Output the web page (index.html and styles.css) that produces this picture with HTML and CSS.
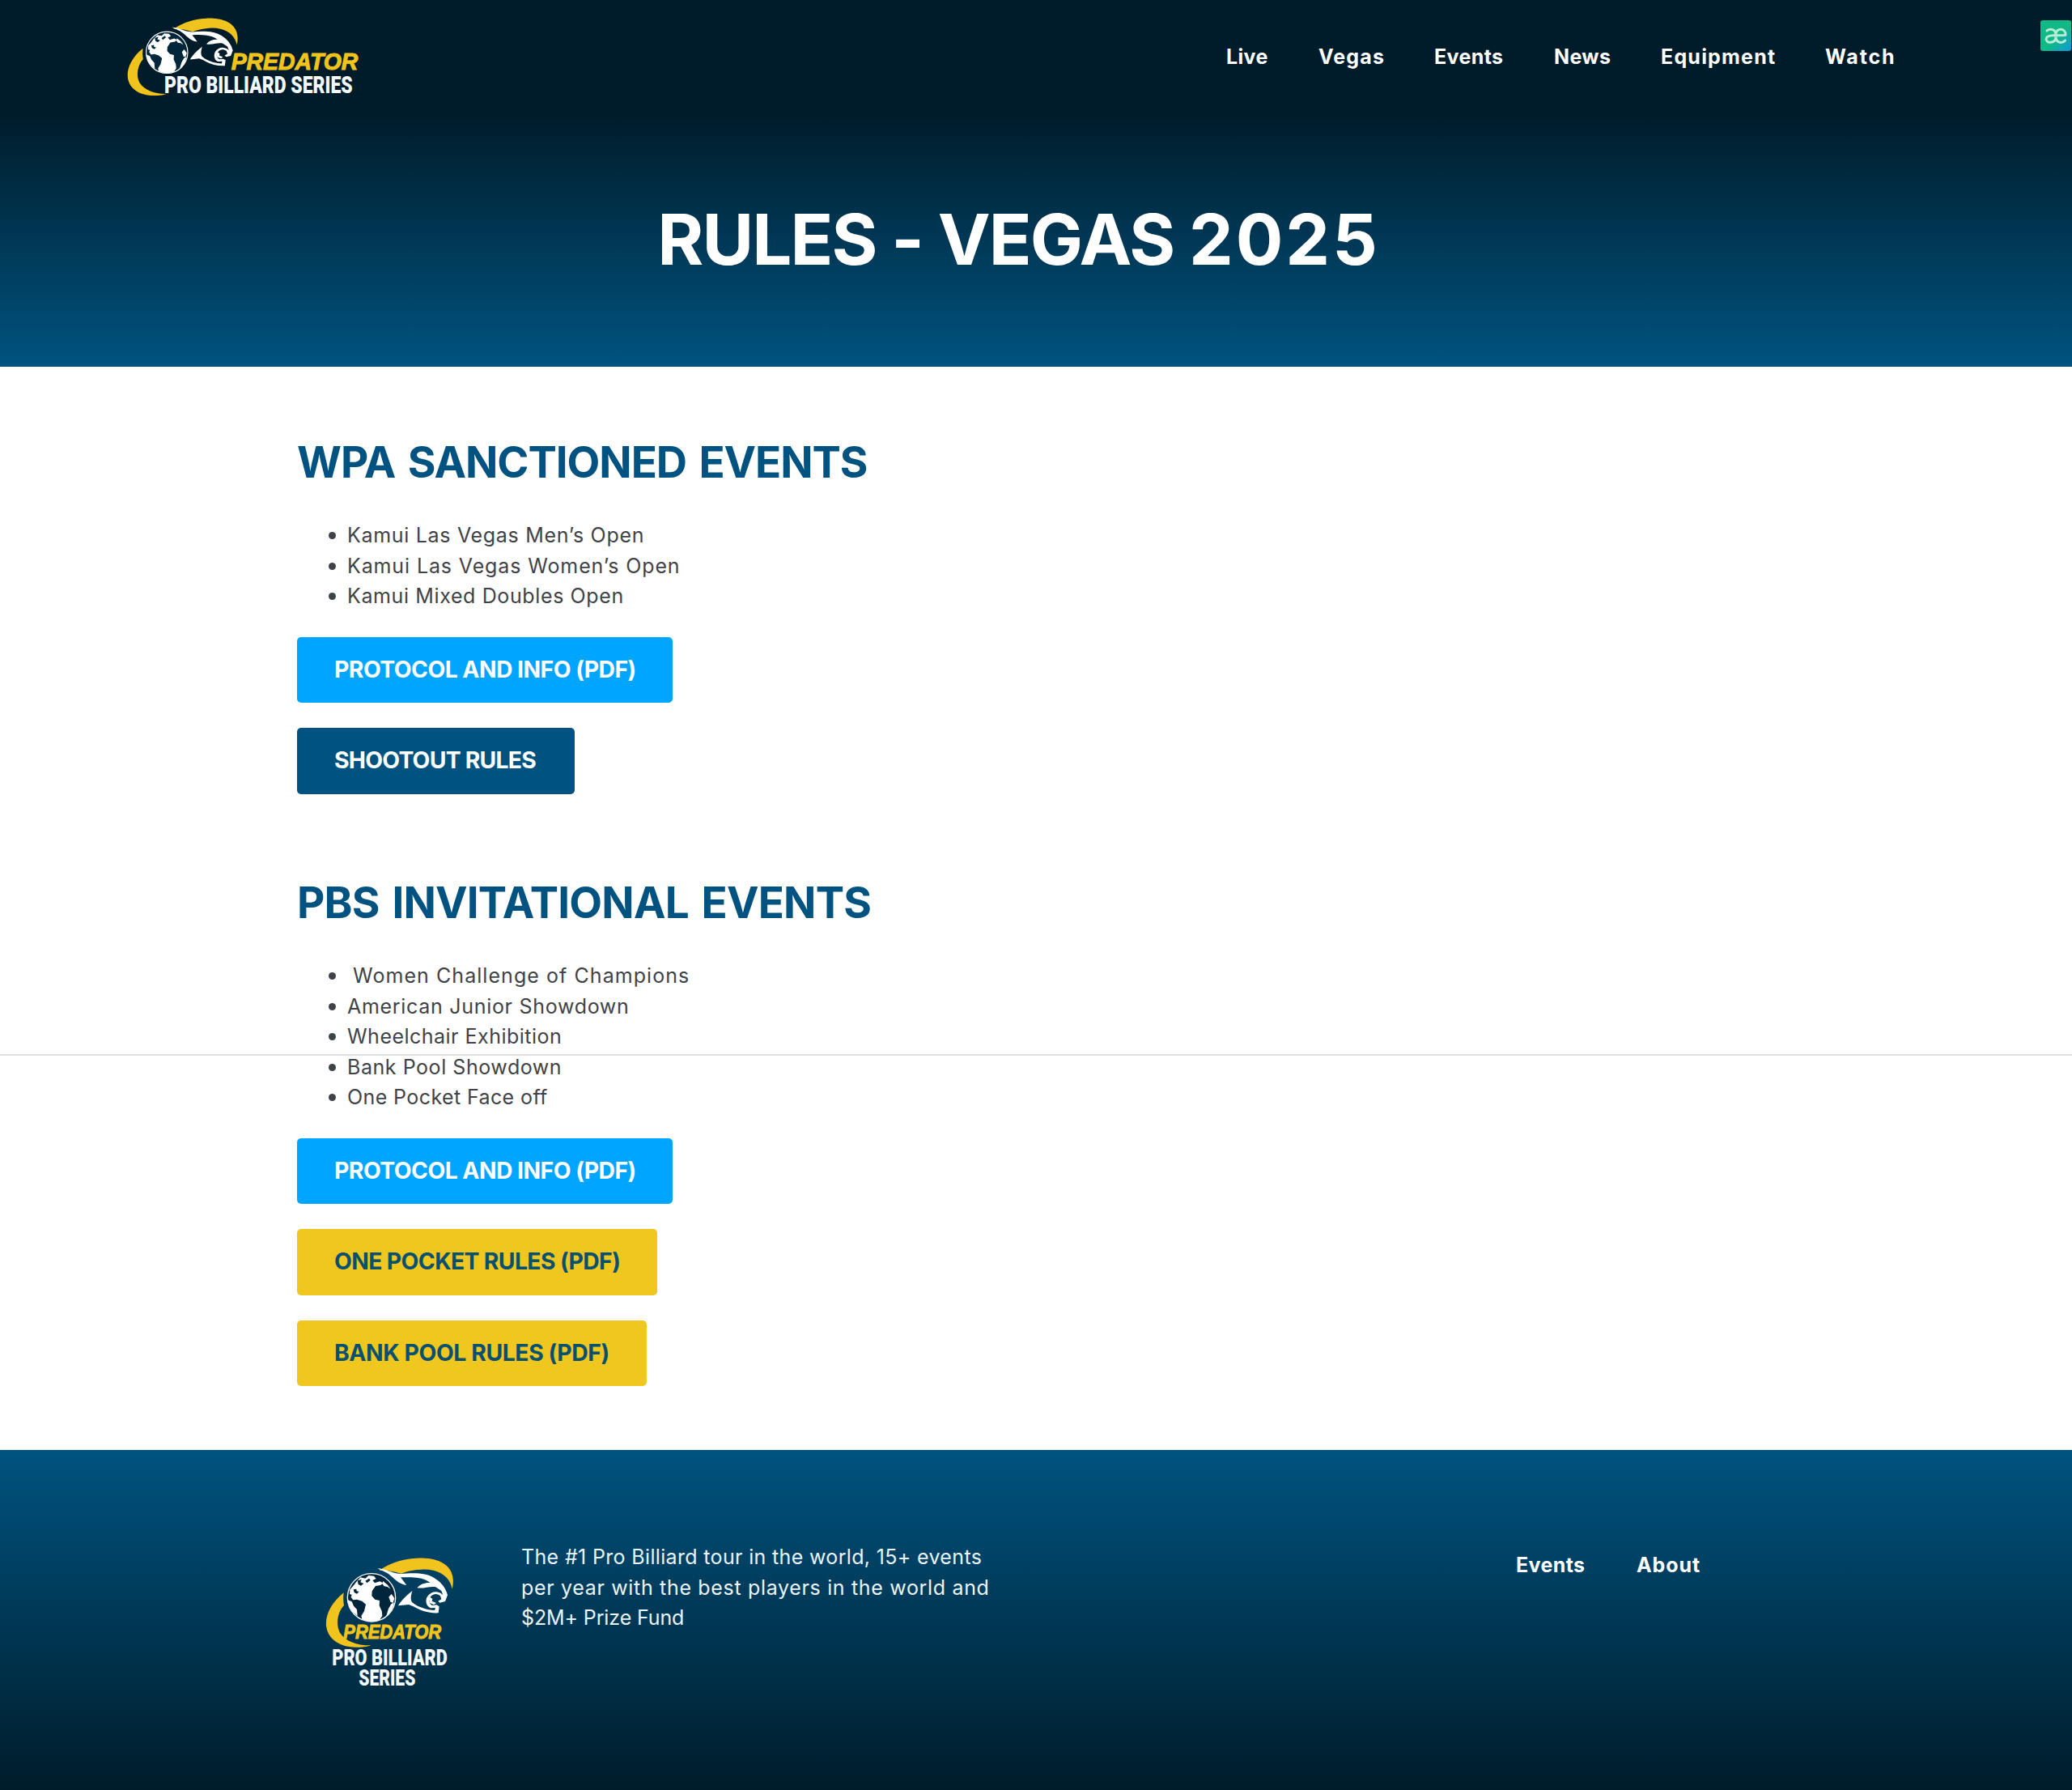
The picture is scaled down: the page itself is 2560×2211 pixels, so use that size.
FILE: index.html
```html
<!DOCTYPE html>
<html lang="en">
<head>
<meta charset="utf-8">
<title>Rules - Vegas 2025</title>
<link rel="stylesheet" href="styles.css">
</head>
<body>
<svg class="defs" aria-hidden="true">
  <defs>
    <symbol id="emblem" viewBox="0 0 570 600" overflow="visible">
      <!-- orbit swooshes -->
      <path fill="#f0c41c" d="M236 119C285 85 345 71 405 74C480 78 523 118 506 188C500 154 478 130 436 119C392 109 345 121 316 131Q282 119 236 119Z"/>
      <path fill="#f0c41c" d="M104 202C62 235 35 282 39 325C45 378 95 408 165 404C185 403 199 400 205 397C155 398 112 383 90 350C72 315 84 270 105 249Q101 226 104 202Z"/>
      <!-- globe -->
      <circle cx="207" cy="220" r="89" fill="#01263c" stroke="#fff" stroke-width="4"/>
      <path fill="#fff" d="M151 161L166 145L184 149L196 138L216 140L224 150L211 156L219 166L238 160L250 166L241 174L222 177L209 196L208 214L220 227L237 231L236 250L245 270L247 287L237 303C217 311 195 309 172 301L169 288L180 270L186 245L172 233L153 227L139 229L131 218L134 209L126 207L127 190L139 177Z"/>
      <path fill="#fff" d="M118 228L134 235L141 251L153 264L155 288C137 276 122 255 118 228ZM250 159L267 173L278 188L266 180L254 178L247 169ZM281 207L292 222L287 239L278 237L271 218ZM291 238C287 262 276 279 261 290L270 261L280 244Z"/>
      <path fill="#01263c" d="M155 157L170 153L166 163L178 168L168 176L158 171ZM184 158L198 149L203 155L190 166ZM140 190L151 188L152 196L161 198L153 206L143 201Z"/>
      <!-- panther -->
      <path fill="#fff" d="M228 112C256 113 283 130 313 132C370 127 411 129 439 147C468 164 483 187 489 211L480 234L460 239L454 233L466 226L462 214C450 204 435 205 425 218C416 230 421 244 431 249L448 247L458 253L455 277C421 279 390 269 361 252L345 246L306 250C315 233 340 209 358 195C353 213 350 227 358 238C381 257 414 266 441 267L444 258L426 259C409 252 405 232 414 216C427 198 446 194 464 204L472 210L466 195L445 181C424 176 403 188 376 184C388 169 409 163 424 165C397 142 353 144 315 145L337 174C306 169 294 151 276 137C260 124 242 119 228 112Z"/>
      <path fill="#fff" d="M418 214L433 225L431 233L447 240L438 246L422 240Z"/>
    </symbol>
    <linearGradient id="badge-fill" x1="0" y1="0" x2="1" y2="1">
      <stop offset=".55" stop-color="#12b886"/><stop offset="1" stop-color="#0c9bdc"/>
    </linearGradient>
  </defs>
</svg>

<header class="site-header">
  <a class="header-logo">
    <svg viewBox="0 0 960 360" width="320" height="120" role="img" aria-label="Predator Pro Billiard Series">
      <use href="#emblem" x="0" y="0" width="570" height="600" transform="translate(19.5 -26) scale(.866)"/>
      <text class="logo-predator" x="437" y="227" textLength="470" lengthAdjust="spacingAndGlyphs">PREDATOR</text>
      <rect x="188" y="245" width="24" height="74" fill="#001c2a"/>
      <text class="logo-series" x="189" y="314" textLength="698" lengthAdjust="spacingAndGlyphs">PRO BILLIARD SERIES</text>
    </svg>
  </a>
  <nav class="main-nav">
    <a class="nav-live">Live</a><a class="nav-vegas">Vegas</a><a class="nav-events">Events</a><a class="nav-news">News</a><a class="nav-equipment">Equipment</a><a class="nav-watch">Watch</a>
  </nav>
</header>

<div class="hero"><h1>RULES - VEGAS <span class="year">2025</span></h1></div>

<main>
  <section>
    <h2 class="title-wpa">WPA SANCTIONED EVENTS</h2>
    <ul>
      <li><span class="t-men">Kamui Las Vegas Men’s Open</span></li>
      <li><span class="t-women">Kamui Las Vegas Women’s Open</span></li>
      <li><span class="t-doubles">Kamui Mixed Doubles Open</span></li>
    </ul>
    <div class="buttons">
      <a class="btn btn-sky btn-protocol">PROTOCOL AND INFO (PDF)</a>
      <a class="btn btn-navy btn-shootout">SHOOTOUT RULES</a>
    </div>
  </section>
  <section>
    <h2 class="title-pbs">PBS INVITATIONAL EVENTS</h2>
    <ul>
      <li><span class="t-champions">Women Challenge of Champions</span></li>
      <li><span class="t-junior">American Junior Showdown</span></li>
      <li><span class="t-wheelchair">Wheelchair Exhibition</span></li>
      <li><span class="t-bank">Bank Pool Showdown</span></li>
      <li><span class="t-pocket">One Pocket Face off</span></li>
    </ul>
    <div class="buttons">
      <a class="btn btn-sky btn-protocol">PROTOCOL AND INFO (PDF)</a>
      <a class="btn btn-gold btn-pocket">ONE POCKET RULES (PDF)</a>
      <a class="btn btn-gold btn-bank">BANK POOL RULES (PDF)</a>
    </div>
  </section>
</main>

<footer>
  <svg class="footer-logo" viewBox="0 0 570 600" width="190" height="200" role="img" aria-label="Predator Pro Billiard Series">
    <use href="#emblem" width="570" height="600"/>
    <text class="logo-predator" x="103" y="373" textLength="362" lengthAdjust="spacingAndGlyphs">PREDATOR</text>
    <text class="logo-series" x="61" y="472" textLength="427" lengthAdjust="spacingAndGlyphs">PRO BILLIARD</text>
    <text class="logo-series" x="160" y="546" textLength="210" lengthAdjust="spacingAndGlyphs">SERIES</text>
  </svg>
  <p><span class="f-one">The #1 Pro Billiard tour in the world, 15+ events</span><span class="f-two">per year with the best players in the world and</span><span class="f-three">$2M+ Prize Fund</span></p>
  <nav class="footer-nav"><a class="nav-events">Events</a><a class="nav-about">About</a></nav>
</footer>

<div class="page-rule"></div>
<svg class="badge" viewBox="0 0 38 38" width="38" height="38" aria-hidden="true">
  <rect width="38" height="38" rx="3" fill="url(#badge-fill)"/>
  <path fill="none" stroke="#b9ecd8" stroke-width="3" stroke-linecap="round" stroke-linejoin="round" d="M8 13C11 10.500 17 10.500 18.500 15L19 22C18 28 8 29.500 7 23.500C7 18.500 13 18.500 31 18.500C31.500 9 20 9 19 17V21C20 28.500 27 29 30.500 25"/>
</svg>
</body>
</html>
```
FILE: styles.css
```css
* { box-sizing: border-box; }

body {
  margin: 0;
  position: relative;
  background: #fff;
  font: 400 25px/37.5px Inter, sans-serif;
  color: #3f4347;
}

h1, h2, ul, p { margin: 0; }
.defs { position: absolute; width: 0; height: 0; }

/* Header */
.site-header {
  display: flex;
  justify-content: space-between;
  height: 140px;
  padding: 10px 220px 0 140px;
  background: #001c2a;
}
.header-logo svg { display: block; }
.logo-predator { font: italic 700 87px "Liberation Sans", sans-serif; fill: #f0c41c; stroke: #f0c41c; stroke-width: 3; }
.logo-series { font: 900 90px Roboto, sans-serif; fill: #f2f8fc; }
.footer-logo .logo-predator { font-size: 74px; }
.footer-logo .logo-series { font-size: 83px; }

.main-nav {
  display: grid;
  grid-template-columns: 114px 143px 148px 132px 203px 85px;
  padding-top: 42px;
}
.main-nav, .footer-nav { color: #fff; font-weight: 700; white-space: nowrap; }
.nav-live { letter-spacing: .35px; }
.nav-vegas { letter-spacing: 1.16px; }
.nav-events { letter-spacing: .37px; }
.nav-news { letter-spacing: .38px; }
.nav-equipment { letter-spacing: 1.21px; }
.nav-watch { letter-spacing: 1.84px; }
.nav-about { letter-spacing: .92px; }

/* Title band */
.hero {
  height: 313px;
  padding: 106px 43px 0 0;
  background: linear-gradient(#001c2a, #005380);
  text-align: center;
}
h1 { font: 700 87px/100px Inter, sans-serif; letter-spacing: -1.9px; color: #fff; }
.year { letter-spacing: 3px; }

/* Rules */
main {
  display: flex;
  flex-direction: column;
  gap: 104.5px;
  padding: 88px 367px 79px;
}
h2 { font: 700 53px/60px Inter, sans-serif; color: #005380; white-space: nowrap; word-spacing: 4px; }
.title-wpa { letter-spacing: -1.08px; }
.title-pbs { letter-spacing: -.82px; }

ul { list-style: none; padding: 42px 0 31px 39px; }
li { display: flex; align-items: center; }
li::before { content: ""; width: 9px; height: 9px; margin-right: 14px; border-radius: 50%; background: #3f4347; }
.t-men { letter-spacing: .69px; }
.t-women { letter-spacing: .88px; }
.t-doubles { letter-spacing: .62px; }
.t-champions { padding-left: 7px; letter-spacing: 1.06px; }
.t-junior { letter-spacing: .7px; }
.t-wheelchair { letter-spacing: .48px; }
.t-bank { letter-spacing: .55px; }
.t-pocket { letter-spacing: .4px; }

.buttons { display: flex; flex-direction: column; align-items: flex-start; gap: 31.5px; }
.btn {
  height: 81.3px;
  padding-left: 46px;
  border-radius: 5px;
  font: 700 28.3px/81px Inter, sans-serif;
  white-space: nowrap;
}
.btn-sky { background: #00a5ff; color: #fff; }
.btn-navy { background: #005380; color: #fff; }
.btn-gold { background: #f0c71e; color: #07506f; }
.btn-protocol { width: 464px; letter-spacing: -.52px; }
.btn-shootout { width: 343px; letter-spacing: -.75px; }
.btn-pocket { width: 445px; letter-spacing: -.6px; }
.btn-bank { width: 432px; letter-spacing: -.39px; }

/* Footer */
footer {
  display: flex;
  height: 421px;
  padding: 109px 459px 0 390px;
  background: linear-gradient(#005380, #001c2a);
  color: #fff;
}
footer p { padding: 5px 0 0 64px; color: #e9f5fb; white-space: nowrap; }
footer p span { display: block; }
.f-one { letter-spacing: .34px; }
.f-two { letter-spacing: .67px; }
.f-three { letter-spacing: -.12px; }
.footer-nav { display: grid; grid-template-columns: 149px 79px; margin-left: auto; padding-top: 15px; }

/* Overlays */
.page-rule { position: absolute; top: 1302px; left: 0; right: 0; height: 2px; background: #dfe0e1; }
.badge { position: absolute; top: 25px; right: 1px; }
```
